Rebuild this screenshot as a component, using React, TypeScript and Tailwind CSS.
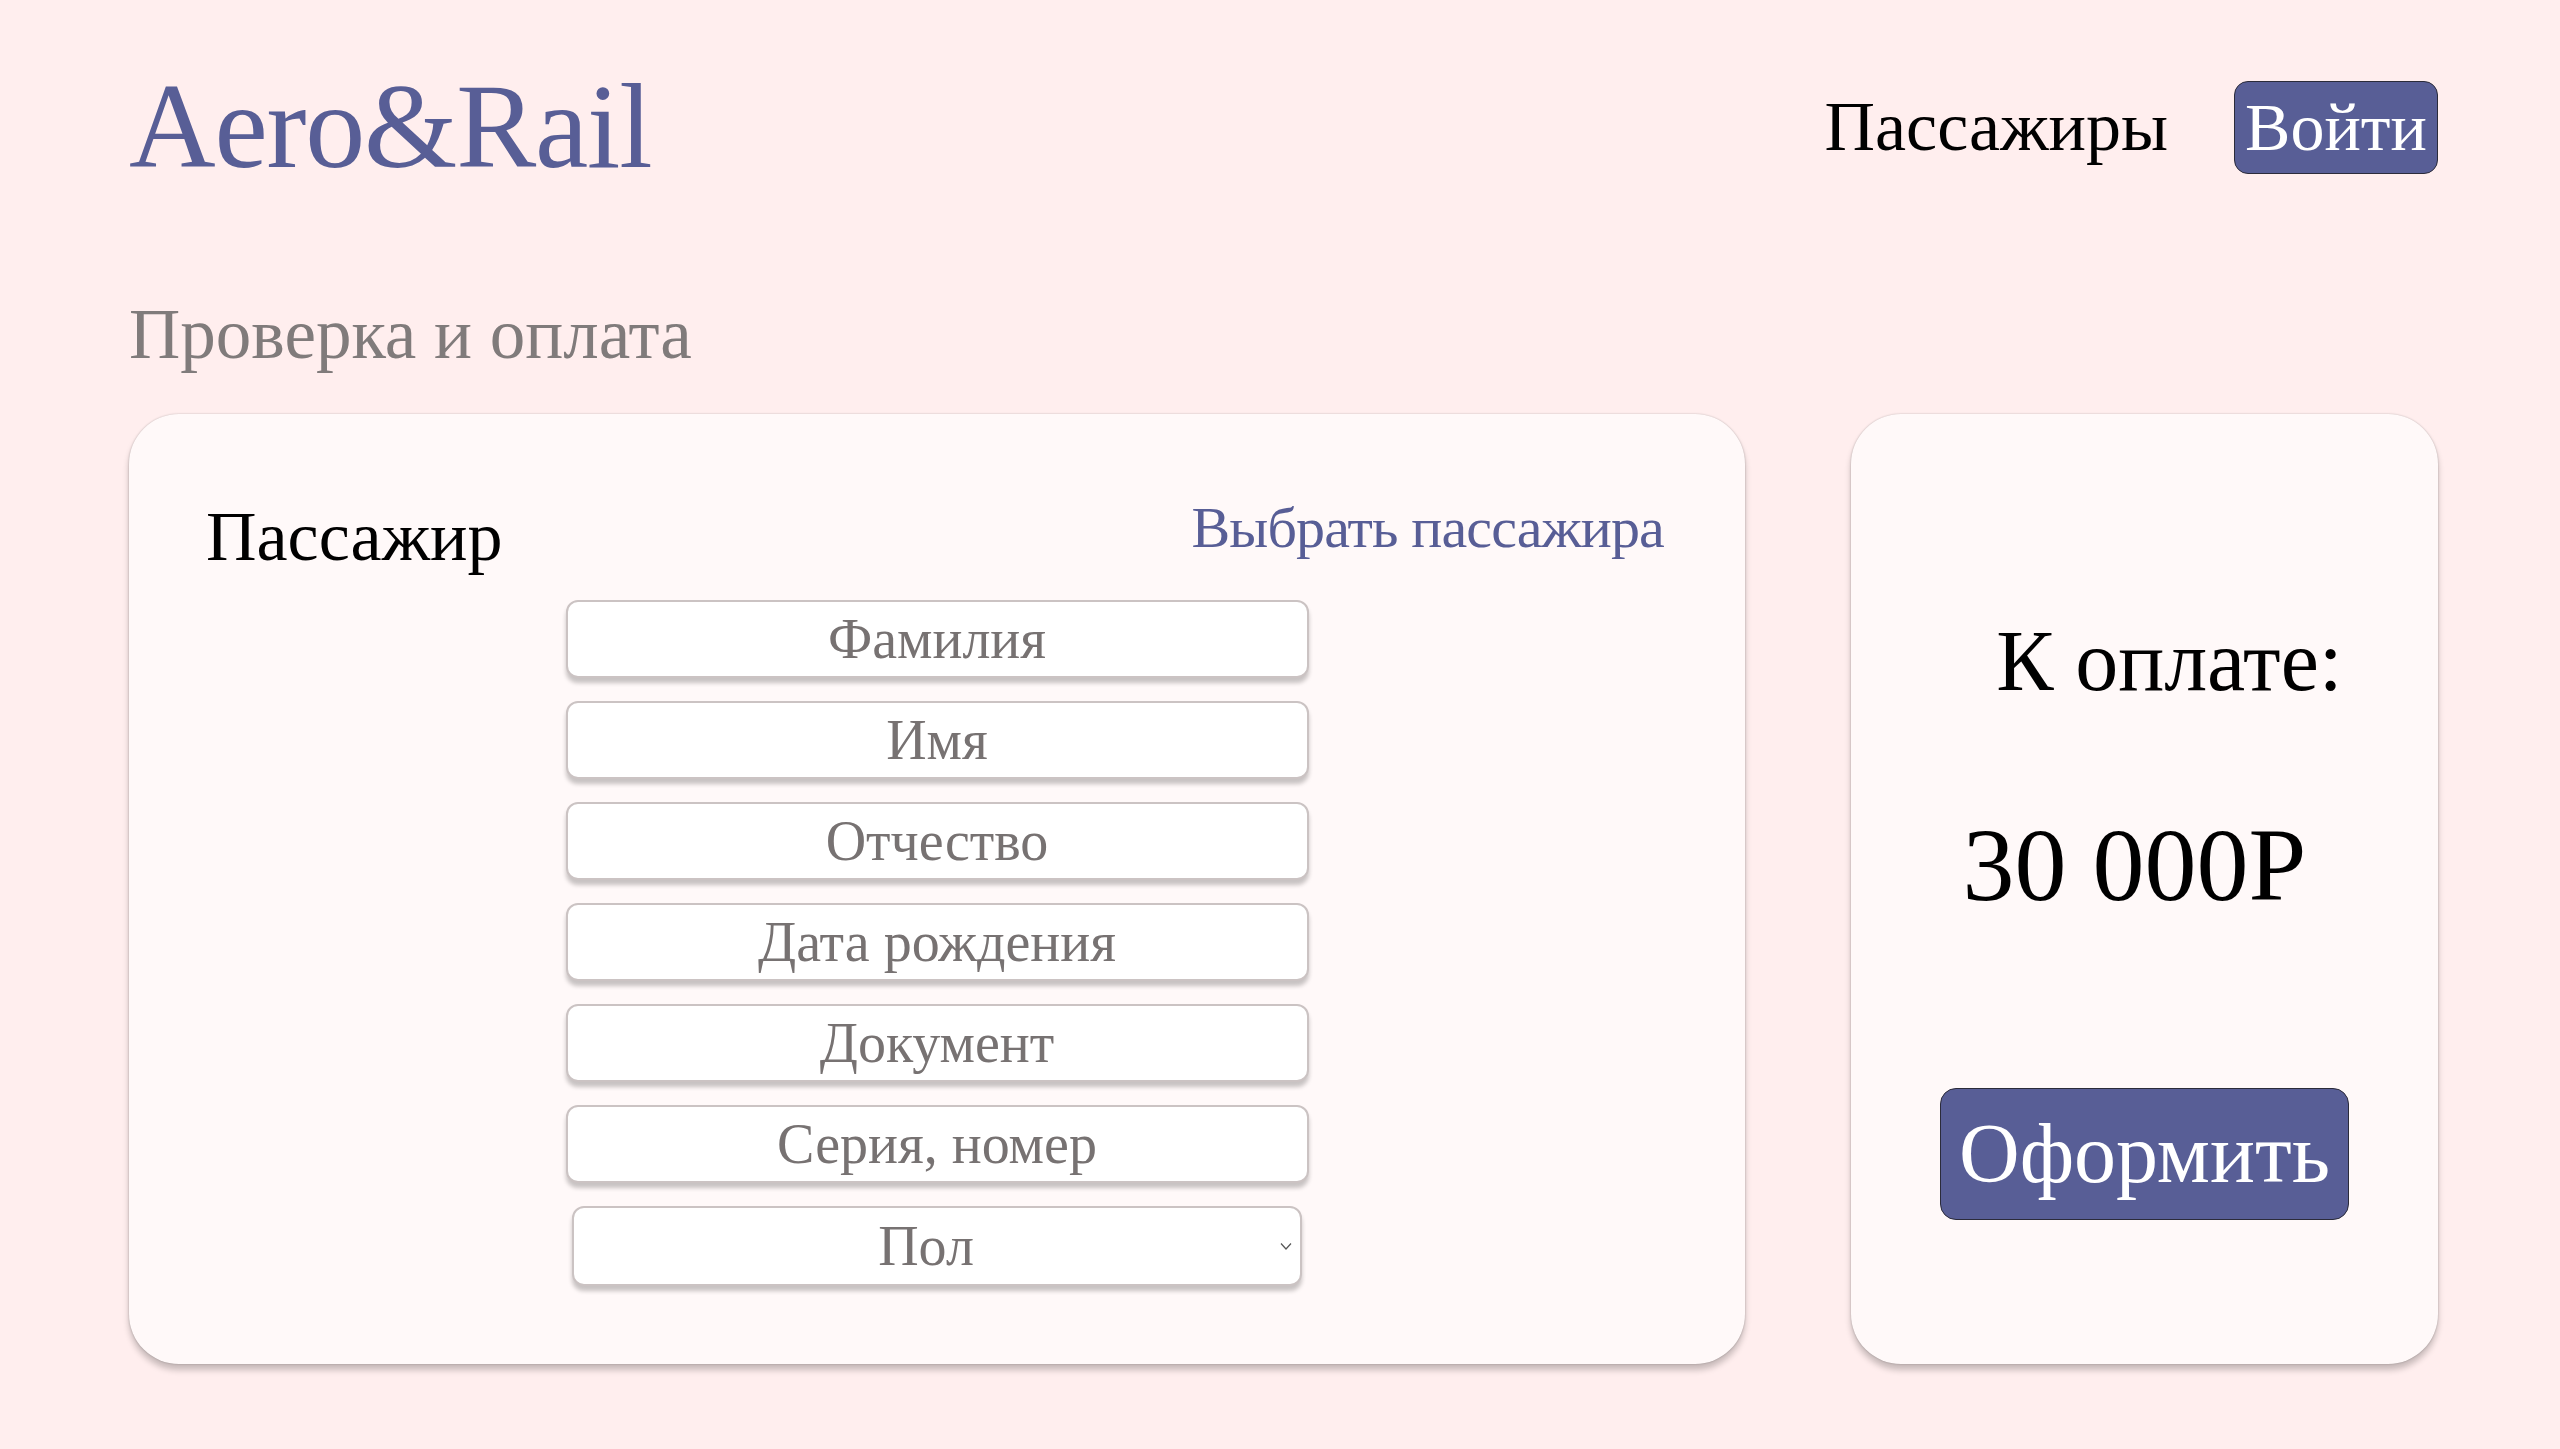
const serif = "font-['Liberation_Serif','Times_New_Roman',serif]";

const fields = ['Фамилия', 'Имя', 'Отчество', 'Дата рождения', 'Документ', 'Серия, номер'];

function Field(props: { placeholder: string }) {
  return (
    <input
      type="text"
      placeholder={props.placeholder}
      className="w-[743px] h-[78px] rounded-[12px] border-2 border-[#cbc3c3] bg-white text-center text-[56px] leading-none text-[#777272] placeholder:text-[#777272] shadow-[0_5px_4px_rgba(0,0,0,0.22)] outline-none"
    />
  );
}

function GenderSelect() {
  return (
    <div className="relative w-[730px] h-[80px]">
      <select
        defaultValue=""
        className="w-full h-full appearance-none rounded-[12px] border-2 border-[#cbc3c3] bg-white pr-[22px] text-center [text-align-last:center] text-[56px] leading-none text-[#777272] shadow-[0_5px_4px_rgba(0,0,0,0.22)] outline-none"
      >
        <option value="" disabled>Пол</option>
        <option value="m">Мужской</option>
        <option value="f">Женский</option>
      </select>
      <svg className="absolute right-[10px] top-[36px] w-[12px] h-[9px] pointer-events-none" viewBox="0 0 12 9" fill="none">
        <path d="M1 1.5 L6 7 L11 1.5" stroke="#555" strokeWidth="1.2" />
      </svg>
    </div>
  );
}

export default function App() {
  return (
    <div className={`min-h-[1449px] w-full bg-[#ffeeee] pl-[129px] pr-[122px] ${serif}`}>
      <header className="flex items-center justify-between pt-[67px]">
        <div className="text-[120px] leading-none tracking-[-0.01em] text-[#585e96]">Aero&amp;Rail</div>
        <nav className="flex items-center gap-[66px]">
          <a className="text-[70px] leading-none text-black">Пассажиры</a>
          <button className="h-[93px] w-[204px] rounded-[14px] border border-[#2b2b3a] bg-[#585e96] text-[68px] leading-none text-white">
            Войти
          </button>
        </nav>
      </header>

      <h1 className="mt-[112px] text-[71px] leading-none text-[#807b7b]">Проверка и оплата</h1>

      <div className="mt-[44px] flex gap-[106px]">
        <section className="w-[1616px] h-[950px] rounded-[50px] bg-[#fff9f9] shadow-[0_0_2px_rgba(0,0,0,0.25),0_6px_6px_rgba(0,0,0,0.22)]">
          <div className="flex items-start justify-between pl-[77px] pr-[81px] pt-[85px]">
            <h2 className="mt-[3px] text-[70px] leading-none text-black">Пассажир</h2>
            <a className="text-[58px] leading-none tracking-[-0.015em] text-[#585e96]">Выбрать пассажира</a>
          </div>
          <div className="mt-[28px] flex flex-col items-center gap-[23px]">
            {fields.map(f => <Field key={f} placeholder={f} />)}
            <GenderSelect />
          </div>
        </section>

        <section className="w-[587px] h-[950px] rounded-[50px] bg-[#fff9f9] shadow-[0_0_2px_rgba(0,0,0,0.25),0_6px_6px_rgba(0,0,0,0.22)] flex flex-col items-center pt-[204px]">
          <p className="ml-[50px] text-[86px] leading-none text-black">К оплате:</p>
          <p className="mt-[109px] mr-[20px] text-[104px] leading-none text-black">30 000Р</p>
          <button className="mt-[171px] h-[132px] w-[409px] rounded-[16px] border border-[#2b2b3a] bg-[#585e96] text-[84px] leading-none text-white">
            Оформить
          </button>
        </section>
      </div>
    </div>
  );
}
